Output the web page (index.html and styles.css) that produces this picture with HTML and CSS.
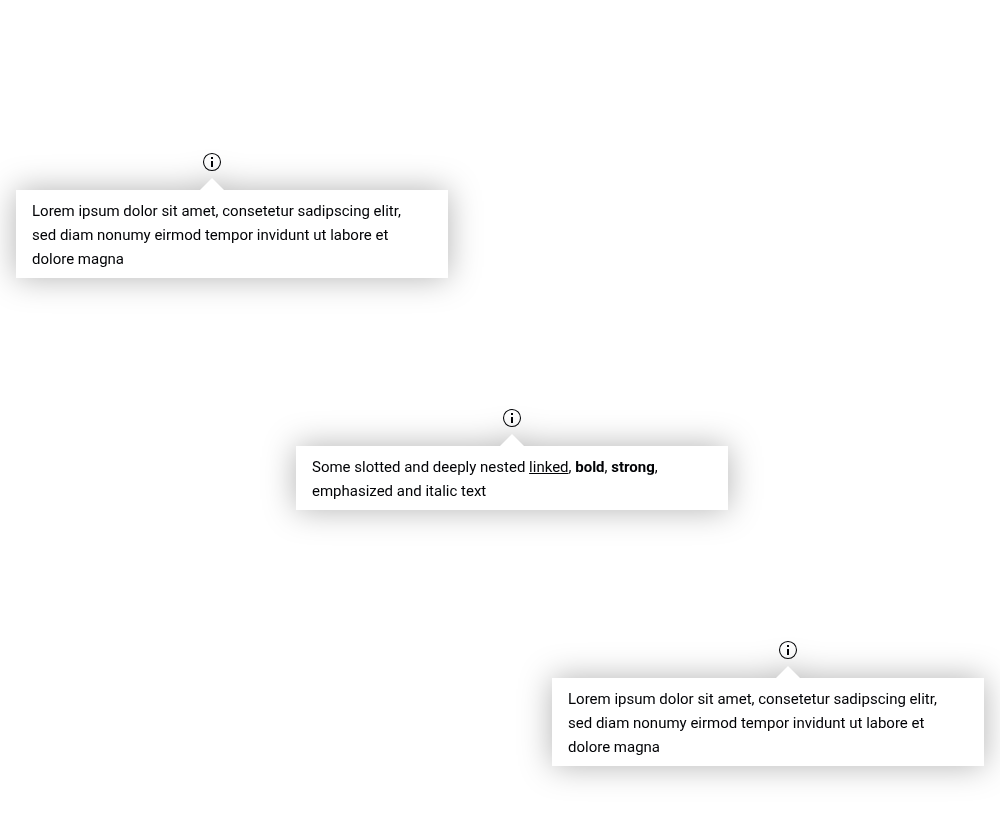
FILE: index.html
```html
<!DOCTYPE html>
<html lang="en">
<head>
<meta charset="utf-8">
<title>Popover</title>
<link rel="stylesheet" href="styles.css">
</head>
<body>
<svg class="sprite" aria-hidden="true">
  <symbol id="info" viewBox="0 0 24 24">
    <circle cx="12" cy="12" r="8.5" fill="none" stroke="currentColor" stroke-width="1.05"/>
    <path d="M11 7h2v2h-2zM11 11h2v6h-2z" fill="currentColor"/>
  </symbol>
</svg>
<main class="page">
  <section class="popover popover-start">
    <div class="anchor">
      <button class="trigger" type="button" aria-label="More information" aria-describedby="note-1"><svg class="icon"><use href="#info"/></svg></button>
    </div>
    <div class="bubble">
      <div class="anchor"><span class="arrow"></span></div>
      <p class="content" id="note-1">Lorem ipsum dolor sit amet, consetetur sadipscing elitr, sed diam nonumy eirmod tempor invidunt ut labore et dolore magna</p>
    </div>
  </section>
  <section class="popover popover-center">
    <div class="anchor">
      <button class="trigger" type="button" aria-label="More information" aria-describedby="note-2"><svg class="icon"><use href="#info"/></svg></button>
    </div>
    <div class="bubble">
      <div class="anchor"><span class="arrow"></span></div>
      <p class="content" id="note-2">Some slotted and deeply nested <a class="link" href="#">linked</a>, <b>bold</b>, <strong>strong</strong>, <em>emphasized</em> and <i>italic</i> text</p>
    </div>
  </section>
  <section class="popover popover-end">
    <div class="anchor">
      <button class="trigger" type="button" aria-label="More information" aria-describedby="note-3"><svg class="icon"><use href="#info"/></svg></button>
    </div>
    <div class="bubble">
      <div class="anchor"><span class="arrow"></span></div>
      <p class="content" id="note-3">Lorem ipsum dolor sit amet, consetetur sadipscing elitr, sed diam nonumy eirmod tempor invidunt ut labore et dolore magna</p>
    </div>
  </section>
</main>
</body>
</html>
```
FILE: styles.css
```css
* {
  box-sizing: border-box;
}

body {
  margin: 0;
  background: #fff;
  color: #010205;
  font: 15px/24px Roboto, "Liberation Sans", sans-serif;
}

.sprite {
  position: absolute;
  width: 0;
  height: 0;
}

.page {
  display: flex;
  flex-direction: column;
  gap: 128px;
  padding: 150px 16px 64px;
}

.popover {
  width: 100%;
  max-width: 432px;
}

.popover-start {
  align-self: flex-start;
}

.popover-center {
  align-self: center;
  margin-left: 24px;
}

.popover-end {
  align-self: flex-end;
}

.anchor {
  display: flex;
  justify-content: center;
}

.popover-start .anchor {
  padding-right: 40px;
}

.popover-end .anchor {
  padding-left: 40px;
}

.trigger {
  position: relative;
  z-index: 1;
  width: 24px;
  height: 24px;
  padding: 0;
  border: 0;
  background: none;
  color: inherit;
  cursor: pointer;
}

.icon {
  display: block;
  width: 24px;
  height: 24px;
}

.bubble {
  padding-top: 4px;
  filter: drop-shadow(0 0 16px rgba(0, 0, 0, 0.3));
}

.arrow {
  width: 24px;
  height: 12px;
  background: #fff;
  clip-path: polygon(50% 0, 100% 100%, 0 100%);
}

.content {
  margin: 0;
  padding: 9px 40px 7px 16px;
  background: #fff;
}

.content em,
.content i {
  font-style: normal;
}

.link {
  color: inherit;
  text-decoration: underline;
}
```
